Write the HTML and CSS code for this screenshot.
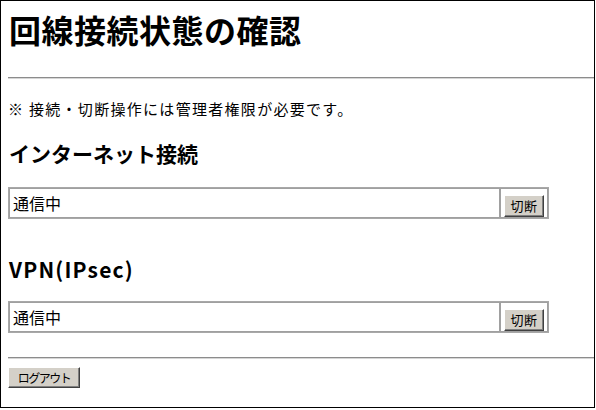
FILE: index.html
```html
<!DOCTYPE html>
<html lang="ja">
<head>
<meta charset="utf-8">
<title>回線接続状態の確認</title>
<link rel="stylesheet" href="styles.css">
</head>
<body>
<div class="frame">
  <h1 class="title">回線接続状態の確認</h1>
  <hr class="rule rule-top">
  <p class="note">※ 接続・切断操作には管理者権限が必要です。</p>
  <h2 class="section">インターネット接続</h2>
  <div class="conn">
    <div class="status">通信中</div>
    <div class="action"><button class="btn btn-cut" type="button">切断</button></div>
  </div>
  <h2 class="section section-vpn">VPN(IPsec)</h2>
  <div class="conn conn-vpn">
    <div class="status">通信中</div>
    <div class="action"><button class="btn btn-cut" type="button">切断</button></div>
  </div>
  <hr class="rule rule-bottom">
  <button class="btn btn-logout" type="button">ログアウト</button>
</div>
</body>
</html>
```

FILE: styles.css
```css
html, body {
  margin: 0;
  padding: 0;
  background: #ffffff;
}
body {
  font-family: "Noto Sans CJK JP", "Noto Sans", sans-serif;
  color: #000;
}
.frame {
  box-sizing: border-box;
  width: 595px;
  height: 408px;
  border: 1px solid #000;
  padding: 0 0 0 7px;
  overflow: hidden;
}
.title {
  margin: 8px 0 0 1px;
  font-size: 32px;
  line-height: 40px;
  font-weight: bold;
  letter-spacing: 0.5px;
}
.rule {
  margin: 0;
  height: 0;
  border: none;
  border-top: 1px solid #8c8c8c;
  border-bottom: 1px solid #d6d6d6;
}
.rule-top {
  margin-top: 28px;
}
.note {
  margin: 20px 0 0 0;
  font-size: 15px;
  line-height: 20px;
  letter-spacing: 1.3px;
}
.section {
  margin: 20px 0 0 1px;
  font-size: 21px;
  line-height: 28px;
  font-weight: bold;
}
.section-vpn {
  margin-top: 36px;
  letter-spacing: 1.2px;
}
.conn {
  display: flex;
  box-sizing: border-box;
  width: 541px;
  height: 32px;
  margin-top: 20px;
  border: 1px solid #a8a8a8;
}
.conn-vpn {
  margin-top: 18px;
}
.status {
  flex: 1;
  box-sizing: border-box;
  border: 1px solid #a0a0a0;
  border-right-width: 2px;
  padding-left: 3px;
  font-size: 16px;
  line-height: 28px;
}
.action {
  width: 47px;
  box-sizing: border-box;
  border: 1px solid #a0a0a0;
  border-left: none;
  padding: 3px 0 0 3px;
}
.btn {
  box-sizing: border-box;
  margin: 0;
  padding: 0;
  background: #d4d0c8;
  border: 1px solid;
  border-color: #ffffff #404040 #404040 #ffffff;
  box-shadow: inset -1px -1px 0 #808080;
  font-family: "Noto Sans CJK JP", sans-serif;
  color: #000;
}
.btn-cut {
  width: 40px;
  height: 22px;
  line-height: 20px;
  font-size: 13px;
  letter-spacing: 0.5px;
}
.rule-bottom {
  margin-top: 24px;
}
.btn-logout {
  display: block;
  margin-top: 8px;
  width: 72px;
  height: 21px;
  line-height: 19px;
  font-size: 12px;
  letter-spacing: -1.5px;
}
```
